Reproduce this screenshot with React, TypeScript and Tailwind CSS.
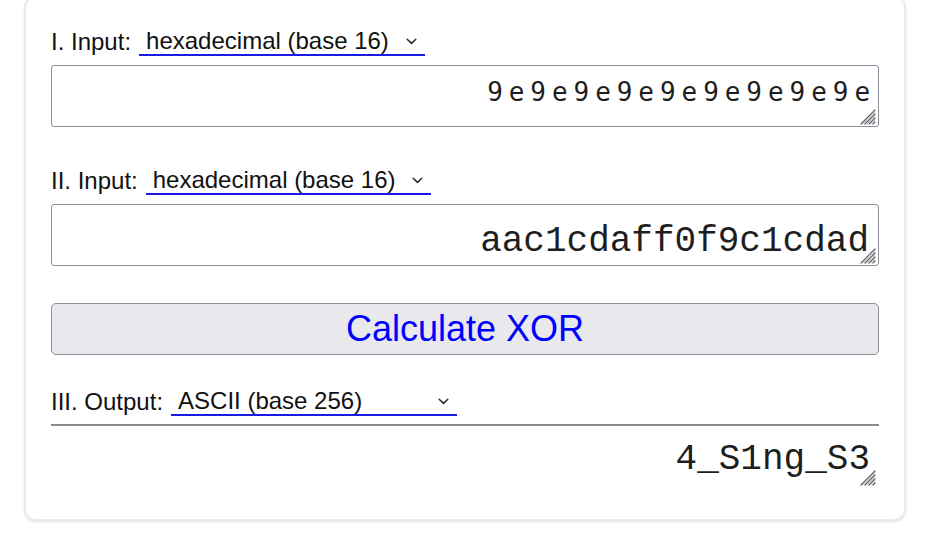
import React from "react";

function Chevron() {
  return (
    <svg width="11" height="7" viewBox="0 0 11 7" className="pointer-events-none absolute right-[8px] top-[10px]">
      <path d="M1.2 1.2 L5.5 5.4 L9.8 1.2" fill="none" stroke="#2a2a2a" strokeWidth="1.5" strokeLinecap="round" strokeLinejoin="round" />
    </svg>
  );
}

function Grip() {
  return (
    <svg width="18" height="18" viewBox="0 0 18 18" className="pointer-events-none absolute bottom-[2px] right-[3px]">
      <path d="M17 3 L3 17 M17 7 L7 17 M17 11 L11 17 M17 15 L15 17" stroke="#5f5f5f" strokeWidth="1.2" strokeLinecap="round" />
      <path d="M17 5 L5 17 M17 9 L9 17 M17 13 L13 17" stroke="#c4c4c4" strokeWidth="0.9" strokeLinecap="round" />
    </svg>
  );
}

function Sel({ value, width }: { value: string; width: string }) {
  return (
    <div className={`relative ${width}`}>
      <select
        defaultValue={value}
        className="h-[28px] w-full appearance-none border-0 border-b-2 border-[#1a1ae6] bg-transparent pl-[7px] pr-[24px] text-[24px] leading-[26px] text-[#111] outline-none [font-family:'Liberation_Sans',Arial,sans-serif]"
      >
        <option>{value}</option>
      </select>
      <Chevron />
    </div>
  );
}

const mono = "[font-family:'Courier_New','Nimbus_Mono_PS','Nimbus_Mono_L','FreeMono','Liberation_Mono',monospace]";

export default function App() {
  return (
    <div className="h-[540px] w-[936px] overflow-hidden bg-white pl-[24px] [font-family:'Liberation_Sans',Arial,sans-serif]">
      <div className="mt-[-4px] w-[882px] rounded-[12px] border-2 border-[#ebebeb] bg-white px-[25px] pb-[31px] pt-[30px] shadow-[0_1px_2px_rgba(0,0,0,0.12)]">
        <div className="flex h-[28px] items-center gap-[8px]">
          <span className="text-[24px] text-[#111]">I. Input:</span>
          <Sel value="hexadecimal (base 16)" width="w-[286px]" />
        </div>
        <div className="relative mt-[9px]">
          <textarea
            readOnly
            rows={1}
            defaultValue="9e9e9e9e9e9e9e9e9e"
            className="block h-[62px] w-full resize-none overflow-hidden rounded-[3px] border border-[#8f8f9d] bg-white pl-[10px] pr-[2px] pt-[7px] text-right text-[26px] tracking-[5.95px] text-[#1e1e1e] outline-none [font-family:'DejaVu_Sans_Mono',monospace]"
          />
          <Grip />
        </div>

        <div className="mt-[40px] flex h-[28px] items-center gap-[8px]">
          <span className="text-[24px] text-[#111]">II. Input:</span>
          <Sel value="hexadecimal (base 16)" width="w-[285px]" />
        </div>
        <div className="relative mt-[9px]">
          <textarea
            readOnly
            rows={1}
            defaultValue="aac1cdaff0f9c1cdad"
            className={`block h-[62px] w-full resize-none overflow-hidden rounded-[3px] border border-[#8f8f9d] bg-white pl-[10px] pr-[9px] pt-[10px] text-right text-[36px] text-[#1e1e1e] outline-none ${mono}`}
          />
          <Grip />
        </div>

        <button className="mt-[37px] block h-[52px] w-full rounded-[5px] border border-[#8f8f9d] bg-[#e9e9ed] text-[36px] leading-none text-[#0000ff] [font-family:'Liberation_Sans',Arial,sans-serif]">
          Calculate XOR
        </button>

        <div className="mt-[33px] flex h-[28px] items-center gap-[8px]">
          <span className="text-[24px] text-[#111]">III. Output:</span>
          <Sel value="ASCII (base 256)" width="w-[286px]" />
        </div>
        <div className="relative mt-[8px]">
          <textarea
            readOnly
            rows={1}
            defaultValue="4_S1ng_S3"
            className={`block h-[64px] w-full resize-none overflow-hidden border-0 border-t-2 border-[#8a8a8a] bg-white pl-[10px] pr-[9px] pt-[7px] text-right text-[36px] text-[#1e1e1e] outline-none ${mono}`}
          />
          <Grip />
        </div>
      </div>
    </div>
  );
}
